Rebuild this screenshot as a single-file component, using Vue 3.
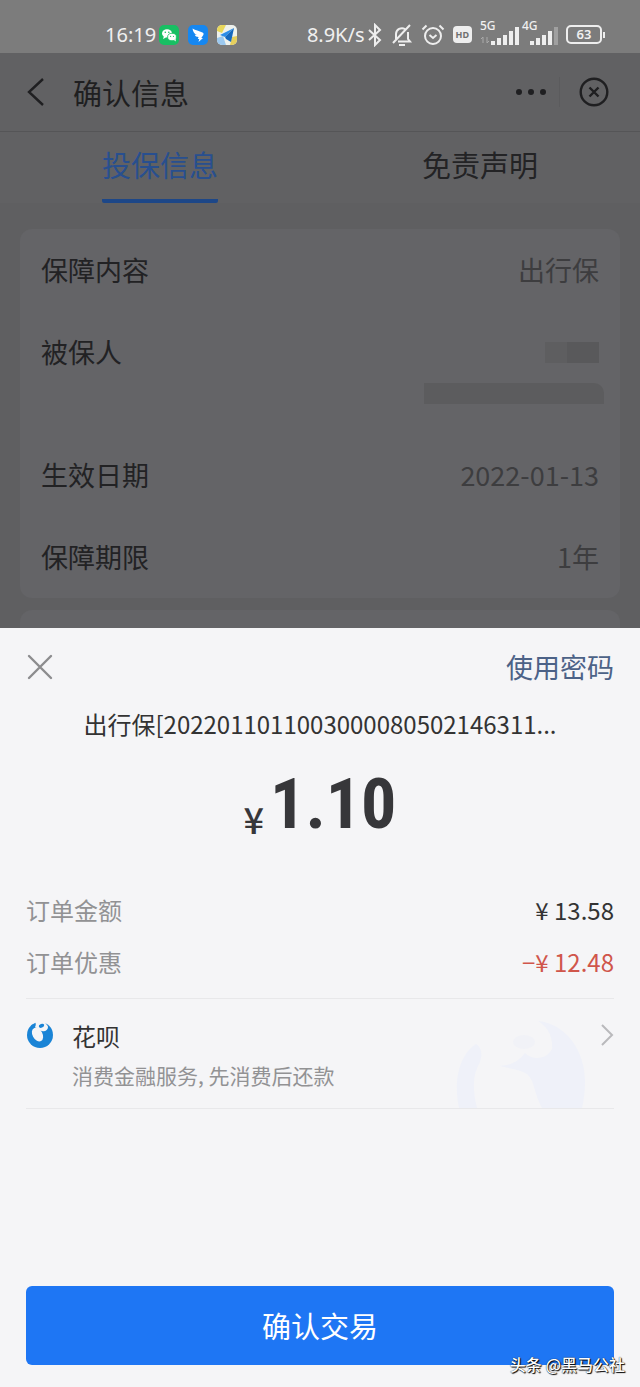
<script setup>
import { ref } from "vue";

const tabs = ["投保信息", "免责声明"];
const activeTab = ref(0);

const policy = [
  { label: "保障内容", value: "出行保" },
  { label: "被保人", masked: true },
  { label: "生效日期", value: "2022-01-13" },
  { label: "保障期限", value: "1年" }
];

const amounts = [
  { label: "订单金额", value: "¥ 13.58" },
  { label: "订单优惠", value: "−¥ 12.48", discount: true }
];
</script>

<template>
  <div class="screen">
    <div class="status">
      <div class="status-left">
        <span class="status-text">16:19</span>
        <svg class="app-icon" viewBox="0 0 20 20">
          <rect width="20" height="20" rx="5" fill="#18bf63" />
          <ellipse cx="8" cy="8.4" rx="5" ry="4.2" fill="#fff" />
          <path d="M5 11l-1 3 3-1.600z" fill="#fff" />
          <ellipse cx="13" cy="12" rx="4.400" ry="3.700" fill="#fff" stroke="#18bf63" stroke-width=".8" />
          <path d="M15 15l1.800 1.500-.3-3z" fill="#fff" />
          <g fill="#18bf63">
            <circle cx="6.300" cy="7.300" r=".8" />
            <circle cx="9.800" cy="7.300" r=".8" />
            <circle cx="11.600" cy="11.300" r=".6" />
            <circle cx="14.500" cy="11.300" r=".6" />
          </g>
        </svg>
        <svg class="app-icon" viewBox="0 0 20 20">
          <rect width="20" height="20" rx="5" fill="#1687f0" />
          <path d="M4.500 3.500c3 2 6.500 2.300 10 4 1.200.6 1.300 1.500.8 2.500l-2 3h1.700L10.500 17l.8-3H9.800l.8-2c-2 0-3.300-1-3.800-2.300l2 .2C6.300 8.800 5 7 4.500 3.500z" fill="#fff" />
        </svg>
        <svg class="app-icon" viewBox="0 0 20 20">
          <rect width="20" height="20" rx="5" fill="#eef1ec" />
          <path d="M0 6V5a5 5 0 0 1 5-5h4L5 8z" fill="#e8d75a" />
          <path d="M0 13l6-2 3 9H5a5 5 0 0 1-5-5z" fill="#9cc9ef" />
          <path d="M13 20l2-8 5-1v4a5 5 0 0 1-5 5z" fill="#e6cf5d" />
          <path d="M17 3L3 10l5 2z" fill="#2b8de8" />
          <path d="M17 3L8 12l1 2 5 3z" fill="#1568bd" />
        </svg>
      </div>
      <div class="status-right">
        <span class="status-text">8.9K/s</span>
        <svg width="16" height="24" viewBox="0 0 16 24" class="line">
          <path d="M2 7l11 10-5 5V2l5 5L2 17" />
        </svg>
        <svg width="22" height="24" viewBox="0 0 22 24" class="line">
          <path d="M5 16V11a6 6 0 0 1 9-5M17 9v7l2 2.500H7M8 22h6M2 20L19 2" />
        </svg>
        <svg width="24" height="24" viewBox="0 0 24 24" class="line">
          <circle cx="12" cy="13" r="8" />
          <path d="M8.500 12l3.500 3 3.500-3M1.500 6.500l4-4M22.500 6.500l-4-4" />
        </svg>
        <span class="hd">HD</span>
        <div class="network">
          <span>5G</span>
          <svg width="40" height="26" viewBox="0 0 40 26" fill="#eee">
            <path d="M3 17v6M1 19l2-2M7 17v6M9 21l-2 2" stroke="#aaa" fill="none" />
            <rect x="11" y="21" width="4" height="4" />
            <rect x="17" y="18" width="4" height="7" />
            <rect x="23" y="15" width="4" height="10" />
            <rect x="29" y="11" width="4" height="14" />
            <rect x="35" y="7" width="4" height="18" />
          </svg>
        </div>
        <div class="network">
          <span>4G</span>
          <svg width="40" height="26" viewBox="0 0 40 26" fill="#eee">
            <rect x="8" y="21" width="4" height="4" />
            <rect x="14" y="18" width="4" height="7" />
            <rect x="20" y="15" width="4" height="10" />
            <rect x="26" y="11" width="4" height="14" />
            <rect x="32" y="7" width="4" height="18" fill="#a0a0a0" />
          </svg>
        </div>
        <span class="battery">63</span>
      </div>
    </div>

    <header class="navbar">
      <button class="icon-button" aria-label="返回">
        <svg width="18" height="30" viewBox="0 0 18 30" class="dark-line">
          <path d="M16 2L2 15l14 13" />
        </svg>
      </button>
      <h1>确认信息</h1>
      <button class="icon-button" aria-label="更多">
        <svg width="32" height="8" viewBox="0 0 32 8" fill="#1f1f21">
          <circle cx="4" cy="4" r="3" />
          <circle cx="16" cy="4" r="3" />
          <circle cx="28" cy="4" r="3" />
        </svg>
      </button>
      <span class="separator"></span>
      <button class="icon-button" aria-label="关闭">
        <svg width="30" height="30" viewBox="0 0 30 30" class="dark-line">
          <circle cx="15" cy="15" r="13.300" />
          <path d="M10.500 10.500l9 9M19.500 10.500l-9 9" />
        </svg>
      </button>
    </header>

    <nav class="tabs">
      <button
        v-for="(tab, i) in tabs"
        :key="tab"
        class="tab"
        :class="{ active: activeTab === i }"
        @click="activeTab = i"
      >
        <span>{{ tab }}</span>
      </button>
    </nav>

    <main class="content">
      <dl class="card">
        <div v-for="row in policy" :key="row.label" class="card-row">
          <dt>{{ row.label }}</dt>
          <dd v-if="row.masked" class="masked">
            <span class="mask-name"></span>
            <span class="mask-id"></span>
          </dd>
          <dd v-else>{{ row.value }}</dd>
        </div>
      </dl>
      <div class="card next-card"></div>
    </main>

    <section class="sheet">
      <div class="sheet-head">
        <button class="icon-button" aria-label="关闭">
          <svg width="28" height="28" viewBox="0 0 28 28" fill="none" stroke="#8c8c8e" stroke-width="2.400" stroke-linecap="round">
            <path d="M3 3l22 22M25 3L3 25" />
          </svg>
        </button>
        <button class="password">使用密码</button>
      </div>

      <p class="order">出行保[2022011011003000080502146311...</p>
      <p class="total"><span class="currency">¥</span><strong>1.10</strong></p>

      <dl class="amounts">
        <div v-for="item in amounts" :key="item.label" class="amount-row">
          <dt>{{ item.label }}</dt>
          <dd :class="{ discount: item.discount }">{{ item.value }}</dd>
        </div>
      </dl>

      <button class="method">
        <svg class="method-mark" width="132" height="90" viewBox="0 0 132 90">
          <path d="M22 26C6 36-1 62 5 90h18c-5-20-4-34 3-46 3-9 1-15-4-18z" fill="#eff1f9" />
          <path d="M84 3c29 3 47 31 47 60 0 10-1 19-3 27H88c-8-14-7-27-15-34-8-5-17-5-27-8 14-1 20-7 25-13 8 8 22 6 27-4 1-12-4-22-14-28z" fill="#eff1f9" />
          <ellipse cx="70" cy="24" rx="11" ry="7" fill="#f1f2f7" />
        </svg>
        <svg class="method-logo" width="28" height="28" viewBox="0 0 28 28">
          <circle cx="14" cy="14" r="13" fill="#1a84d6" />
          <path d="M9 0h10c0 3 3 4 3 6 0 3-3 5-6 4-2 0-3-1-4-2L9 6c1-2 1-3 0-6z" fill="#f5f5f7" />
          <ellipse cx="11.500" cy="13.500" rx="5" ry="7.500" transform="rotate(-28 11.500 13.500)" fill="#f5f5f7" />
          <ellipse cx="15.500" cy="4.800" rx="2.800" ry="1.900" transform="rotate(-20 15.500 4.800)" fill="#1a84d6" />
          <circle cx="7" cy="5.500" r="2" fill="#1a84d6" />
        </svg>
        <span class="method-text">
          <span class="method-name">花呗</span>
          <span class="method-note">消费金融服务, 先消费后还款</span>
        </span>
        <svg class="method-arrow" width="14" height="22" viewBox="0 0 14 22" fill="none" stroke="#b9b9bc" stroke-width="2">
          <path d="M2 1l10 10L2 21" />
        </svg>
      </button>

      <button class="confirm">确认交易</button>
      <span class="watermark">头条 @黑马公社</span>
    </section>
  </div>
</template>

<style>
body {
  margin: 0;
}
</style>

<style scoped>
.screen {
  display: flex;
  flex-direction: column;
  min-height: 100vh;
  background: #5f5f61;
  color: #333;
  font-family: "Noto Sans CJK SC", sans-serif;
  font-weight: 400;
}

button {
  margin: 0;
  padding: 0;
  border: 0;
  background: none;
  color: inherit;
  font: inherit;
  cursor: pointer;
}

h1,
p,
dl,
dd {
  margin: 0;
}

svg {
  display: block;
  flex: none;
}

.status {
  display: flex;
  justify-content: space-between;
  align-items: center;
  box-sizing: border-box;
  height: 53px;
  padding: 16px 38px 0 105px;
  background: #7c7c7c;
  color: #f0f0f0;
  font-family: "Noto Sans", sans-serif;
}

.status-left {
  display: flex;
  align-items: center;
  gap: 9px;
}

.status-right {
  display: flex;
  align-items: center;
  gap: 8px;
}

.status-text {
  margin-right: -6px;
  font-size: 20px;
  line-height: 36px;
}

.app-icon {
  width: 20px;
  height: 20px;
}

.line {
  fill: none;
  stroke: #eee;
  stroke-width: 2;
}

.hd {
  padding: 0 3px;
  border-radius: 4px;
  background: #eee;
  color: #707070;
  font-size: 9px;
  font-weight: 700;
  line-height: 17px;
}

.network {
  position: relative;
  margin-top: -4px;
}

.network + .network {
  margin-left: -6px;
}

.network span {
  position: absolute;
  top: 0;
  left: 0;
  font-size: 12px;
  font-weight: 500;
  line-height: 12px;
}

.battery {
  position: relative;
  width: 32px;
  margin-left: -4px;
  border: 2px solid #eee;
  border-radius: 5px;
  font-size: 13px;
  font-weight: 600;
  line-height: 15px;
  text-align: center;
}

.battery::after {
  content: "";
  position: absolute;
  top: 5px;
  right: -5px;
  width: 2px;
  height: 6px;
  background: #eee;
}

.navbar {
  display: flex;
  align-items: center;
  height: 78px;
  padding: 0 31px 0 27px;
  border-bottom: 1px solid #555557;
  background: #616163;
  color: #1f1f21;
}

.navbar h1 {
  flex: 1;
  margin-left: 28px;
  font-size: 29px;
  font-weight: 400;
  line-height: 42px;
}

.dark-line {
  fill: none;
  stroke: #1f1f21;
  stroke-width: 2.400;
}

.separator {
  width: 1px;
  height: 30px;
  margin: 0 19px 0 12px;
  background: #5b5b5d;
}

.tabs {
  display: flex;
  background: #616163;
  color: #232325;
}

.tab {
  flex: 1;
  font-size: 29px;
  line-height: 42px;
}

.tab span {
  display: inline-block;
  padding: 11px 0 14px;
  border-bottom: 4px solid transparent;
  border-radius: 2px;
}

.tab.active {
  color: #284f8f;
}

.tab.active span {
  border-color: #1d4788;
}

.content {
  padding: 26px 20px 0;
}

.card {
  padding: 0 21px;
  border-radius: 12px;
  background: #646467;
}

.card-row {
  display: flex;
  justify-content: space-between;
  padding: 20px 0;
  font-size: 27px;
  line-height: 42px;
}

.card-row dt {
  color: #222224;
}

.card-row dd {
  color: #3d3d3f;
}

.masked {
  display: flex;
  flex-direction: column;
  align-items: flex-end;
  gap: 20px;
  padding: 11px 0 10px;
}

.mask-name {
  width: 54px;
  height: 21px;
  background: linear-gradient(90deg, #5e5e60 40%, #59595b 40%);
}

.mask-id {
  width: 180px;
  height: 21px;
  margin-right: -5px;
  border-radius: 0 10px 0 0;
  background: #5c5c5e;
}

.next-card {
  height: 18px;
  margin-top: 12px;
  border-radius: 12px 12px 0 0;
}

.sheet {
  position: relative;
  display: flex;
  flex: 1;
  flex-direction: column;
  padding: 0 26px 22px;
  background: #f5f5f7;
}

.sheet-head {
  display: flex;
  justify-content: space-between;
  align-items: center;
  height: 78px;
}

.password {
  color: #4c6287;
  font-size: 27px;
  line-height: 42px;
}

.order {
  overflow: hidden;
  font-size: 24px;
  line-height: 36px;
  text-align: center;
  white-space: nowrap;
}

.total {
  display: flex;
  justify-content: center;
  align-items: flex-end;
  gap: 6px;
  padding: 12px 0 30px;
  color: #37373a;
}

.total strong {
  font-family: "Roboto Condensed", "Roboto", sans-serif;
  font-size: 70px;
  font-weight: 700;
  line-height: 100px;
}

.currency {
  font-size: 36px;
  font-weight: 500;
  line-height: 72px;
}

.amount-row {
  display: flex;
  justify-content: space-between;
  font-size: 24px;
  line-height: 52px;
}

.amounts {
  padding-bottom: 10px;
  border-bottom: 1px solid #e8e8ea;
}

.amounts dt {
  color: #929294;
}

.amounts .discount {
  color: #d0564b;
}

.method {
  position: relative;
  display: flex;
  align-items: flex-start;
  padding: 19px 0 12px;
  border-bottom: 1px solid #e8e8ea;
  text-align: left;
}

.method-mark {
  position: absolute;
  right: 28px;
  bottom: 0;
}

.method-logo {
  margin-top: 3px;
}

.method-text {
  position: relative;
  display: flex;
  flex: 1;
  flex-direction: column;
  margin-left: 18px;
}

.method-name {
  font-size: 24px;
  line-height: 36px;
}

.method-note {
  color: #929294;
  font-size: 21px;
  line-height: 42px;
}

.method-arrow {
  margin-top: 6px;
}

.confirm {
  margin-top: auto;
  border-radius: 6px;
  background: #1e76f4;
  color: #fff;
  font-size: 29px;
  line-height: 79px;
}

.watermark {
  position: absolute;
  right: 15px;
  bottom: 11px;
  color: #fff;
  font-size: 16px;
  font-weight: 500;
  line-height: 24px;
  text-shadow: 1px 1px 1px #000, 0 0 1px #000;
}
</style>
